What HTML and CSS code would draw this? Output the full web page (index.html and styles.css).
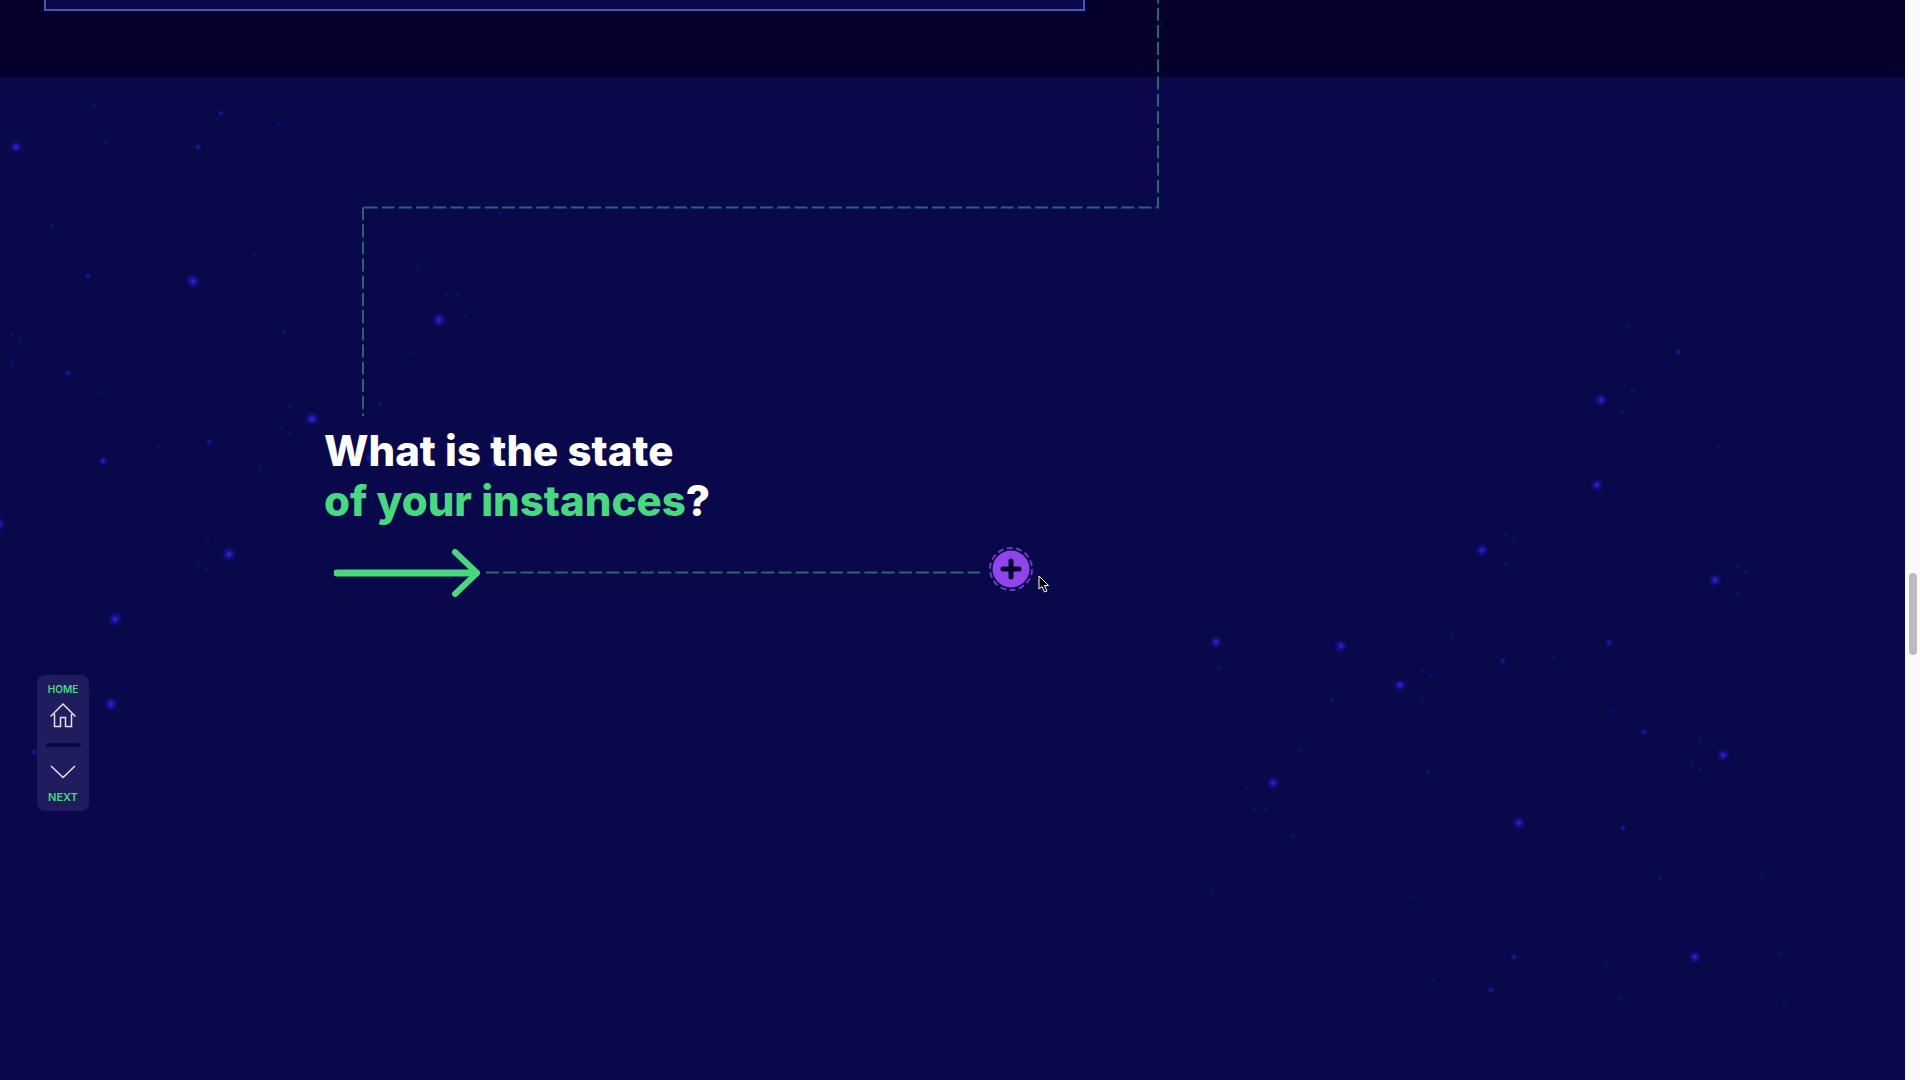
FILE: index.html
```html
<!DOCTYPE html>
<html lang="en">
<head>
<meta charset="utf-8">
<meta name="viewport" content="width=device-width, initial-scale=1">
<title>What is the state of your instances?</title>
<link rel="stylesheet" href="styles.css">
</head>
<body>
<div class="page">
  <section class="previous">
    <div class="panel"></div>
  </section>
  <main class="stage">
    <h1 class="title">What is the state<br><span class="accent">of your instances</span>?</h1>
    <div class="step">
      <svg class="arrow" viewBox="0 0 148 52" aria-hidden="true">
        <path d="M3 26H142" stroke-width="7"/>
        <path d="M121 5L143 26L121 47" stroke-width="6"/>
      </svg>
      <svg class="trail" viewBox="0 0 494 52" aria-hidden="true">
        <path class="dash" d="M0 25.5H494"/>
      </svg>
      <button class="plus" type="button" aria-label="Show more">
        <svg viewBox="0 0 44 44" aria-hidden="true">
          <circle class="ring" cx="22" cy="22" r="21"/>
          <circle class="disc" cx="22" cy="22" r="18.5"/>
          <path class="cross" d="M22 14V30M14 22H30"/>
        </svg>
      </button>
    </div>
  </main>

  <svg class="connector" aria-hidden="true">
    <path class="dash first" d="M1158 0V207.5H363"/>
    <path class="dash" d="M363 207V416"/>
  </svg>

  <svg class="stars stars-left" aria-hidden="true">
    <defs>
      <radialGradient id="glow">
        <stop offset="0" stop-color="#3a3ad0"/>
        <stop offset=".22" stop-color="#1c18ae"/>
        <stop offset=".55" stop-color="#120f88" stop-opacity=".75"/>
        <stop offset="1" stop-color="#08084b" stop-opacity="0"/>
      </radialGradient>
      <radialGradient id="spark">
        <stop offset="0" stop-color="#1c18ae"/>
        <stop offset=".5" stop-color="#140f88" stop-opacity=".8"/>
        <stop offset="1" stop-color="#08084b" stop-opacity="0"/>
      </radialGradient>
    </defs>
    <g fill="url(#glow)">
      <circle cx="16" cy="147" r="8"/><circle cx="193" cy="281" r="9"/><circle cx="439" cy="320" r="9"/>
      <circle cx="312" cy="419" r="9"/><circle cx="229" cy="554" r="9"/><circle cx="115" cy="619" r="9"/>
      <circle cx="111" cy="704" r="9"/><circle cx="103" cy="461" r="6"/><circle cx="-1" cy="524" r="8"/>
    </g>
    <g fill="url(#spark)">
      <circle cx="221" cy="113" r="4"/><circle cx="198" cy="147" r="4"/><circle cx="88" cy="276" r="4"/>
      <circle cx="68" cy="373" r="4"/><circle cx="209" cy="442" r="4"/><circle cx="34" cy="752" r="4"/>
      <circle cx="370" cy="458" r="7"/><circle cx="494" cy="464" r="5"/><circle cx="493" cy="436" r="4"/>
    </g>
    <g class="dust">
      <circle cx="94" cy="106" r="2"/><circle cx="106" cy="142" r="2"/><circle cx="279" cy="124" r="2"/>
      <circle cx="52" cy="226" r="2"/><circle cx="255" cy="254" r="2"/><circle cx="300" cy="208" r="2"/>
      <circle cx="12" cy="335" r="2"/><circle cx="20" cy="341" r="2"/><circle cx="12" cy="363" r="2"/>
      <circle cx="101" cy="393" r="2"/><circle cx="284" cy="332" r="2"/><circle cx="290" cy="406" r="2"/>
      <circle cx="281" cy="428" r="2"/><circle cx="289" cy="434" r="2"/><circle cx="260" cy="467" r="2"/>
      <circle cx="159" cy="446" r="2"/><circle cx="380" cy="404" r="2"/><circle cx="418" cy="269" r="2"/>
      <circle cx="447" cy="294" r="2"/><circle cx="457" cy="294" r="2"/><circle cx="465" cy="316" r="2"/>
      <circle cx="413" cy="353" r="2"/><circle cx="501" cy="213" r="2"/><circle cx="207" cy="541" r="2"/>
      <circle cx="198" cy="563" r="2"/><circle cx="206" cy="569" r="2"/><circle cx="90" cy="691" r="2"/>
      <circle cx="80" cy="713" r="2"/><circle cx="88" cy="718" r="2"/><circle cx="85" cy="777" r="2"/>
    </g>
  </svg>

  <svg class="stars stars-right" viewBox="1180 0 725 1080" aria-hidden="true">
    <g fill="url(#glow)">
      <circle cx="1601" cy="400" r="8"/><circle cx="1597" cy="485" r="8"/><circle cx="1482" cy="550" r="8"/>
      <circle cx="1715" cy="580" r="8"/><circle cx="1216" cy="642" r="8"/><circle cx="1341" cy="646" r="8"/>
      <circle cx="1400" cy="685" r="8"/><circle cx="1273" cy="783" r="8"/><circle cx="1723" cy="755" r="8"/>
      <circle cx="1519" cy="823" r="8"/><circle cx="1695" cy="957" r="8"/>
    </g>
    <g fill="url(#spark)">
      <circle cx="1609" cy="643" r="5"/>
      <circle cx="1678" cy="352" r="4"/><circle cx="1503" cy="661" r="4"/><circle cx="1644" cy="732" r="4"/>
      <circle cx="1623" cy="828" r="4"/><circle cx="1514" cy="957" r="4"/><circle cx="1491" cy="990" r="4"/>
    </g>
    <g class="dust">
      <circle cx="1627" cy="326" r="2"/><circle cx="1624" cy="386" r="2"/><circle cx="1633" cy="390" r="2"/>
      <circle cx="1622" cy="412" r="2"/><circle cx="1728" cy="426" r="2"/><circle cx="1718" cy="447" r="2"/>
      <circle cx="1506" cy="535" r="2"/><circle cx="1514" cy="541" r="2"/><circle cx="1506" cy="564" r="2"/>
      <circle cx="1738" cy="566" r="2"/><circle cx="1746" cy="572" r="2"/><circle cx="1738" cy="594" r="2"/>
      <circle cx="1219" cy="668" r="2"/><circle cx="1452" cy="637" r="2"/><circle cx="1553" cy="658" r="2"/>
      <circle cx="1423" cy="670" r="2"/><circle cx="1431" cy="676" r="2"/><circle cx="1422" cy="699" r="2"/>
      <circle cx="1332" cy="700" r="2"/><circle cx="1611" cy="711" r="2"/><circle cx="1299" cy="750" r="2"/>
      <circle cx="1428" cy="772" r="2"/><circle cx="1700" cy="741" r="2"/><circle cx="1692" cy="763" r="2"/>
      <circle cx="1700" cy="769" r="2"/><circle cx="1247" cy="788" r="2"/><circle cx="1255" cy="810" r="2"/>
      <circle cx="1265" cy="810" r="2"/><circle cx="1293" cy="836" r="2"/><circle cx="1456" cy="850" r="2"/>
      <circle cx="1660" cy="878" r="2"/><circle cx="1762" cy="875" r="2"/><circle cx="1211" cy="891" r="2"/>
      <circle cx="1413" cy="897" r="2"/><circle cx="1606" cy="963" r="2"/><circle cx="1433" cy="980" r="2"/>
      <circle cx="1619" cy="998" r="2"/><circle cx="1785" cy="1003" r="2"/><circle cx="1781" cy="954" r="2"/>
    </g>
  </svg>

  <nav class="jump" aria-label="Page">
    <a class="jump-link home" href="#home">
      <span>HOME</span>
      <svg class="jump-icon" viewBox="0 0 28 26" aria-hidden="true">
        <path d="M1.500 14.5L14 2L26.500 14.5M5.500 12V24.5H11.500V15.500H16.500V24.5H22.500V12"/>
      </svg>
    </a>
    <span class="rule"></span>
    <a class="jump-link" href="#next">
      <svg class="jump-icon chevron" viewBox="0 0 28 14" aria-hidden="true">
        <path d="M2 1L14 12.500L26 1"/>
      </svg>
      <span>NEXT</span>
    </a>
  </nav>

  <svg class="cursor" viewBox="0 0 12 19" aria-hidden="true">
    <path d="M1 1V14L4 11.500L6.500 17L9 16L6.500 10.500H10.500Z"/>
  </svg>
</div>
<div class="scrollbar"><div class="thumb"></div></div>
</body>
</html>
```
FILE: styles.css
```css
* {
  box-sizing: border-box;
}

body {
  margin: 0;
  display: flex;
  min-height: 100vh;
  overflow: hidden;
  background: #08084b;
  color: #fff;
  font-family: Inter, "Liberation Sans", sans-serif;
}

svg {
  display: block;
  fill: none;
}

.page {
  position: relative;
  flex: 1;
  display: flex;
  flex-direction: column;
  overflow: hidden;
}

.previous {
  padding: 0 44px 66px;
  background: #04002b;
}

.panel {
  max-width: 1041px;
  height: 11px;
  border: 2px solid #4a55b8;
  border-top: 0;
  background: #08084b;
}

.stage {
  position: relative;
  z-index: 1;
  flex: 1;
  padding: 349px 324px 0;
}

.title {
  margin: 0;
  font-size: 42px;
  line-height: 50px;
  font-weight: 800;
}

.accent {
  color: #47d880;
}

.step {
  display: flex;
  margin-top: 21px;
  padding-left: 10px;
}

.arrow {
  width: 148px;
  height: 52px;
  margin-right: 4px;
  stroke: #47d880;
  stroke-linecap: round;
  stroke-linejoin: round;
}

.trail {
  width: 494px;
  height: 52px;
  margin-right: 9px;
}

.dash {
  stroke: #27666c;
  stroke-width: 2;
  stroke-dasharray: 13 4.2;
}

.first {
  stroke-dashoffset: 9.5;
}

.plus {
  width: 44px;
  height: 44px;
  padding: 0;
  border: 0;
  background: none;
  cursor: pointer;
}

.ring {
  stroke: #6a3cc0;
  stroke-width: 2;
  stroke-dasharray: 6 3.4;
}

.disc {
  fill: #9045ea;
}

.cross {
  stroke: #08062f;
  stroke-width: 5;
  stroke-linecap: round;
}

.connector {
  position: absolute;
  top: 0;
  left: 0;
  width: 100%;
  height: 420px;
}

.stars {
  position: absolute;
  top: 0;
  height: 1080px;
}

.stars-left {
  left: 0;
  width: 520px;
}

.stars-right {
  right: 0;
  width: 725px;
}

.dust {
  fill: #120f78;
  opacity: 0.8;
}

.jump {
  position: absolute;
  z-index: 2;
  left: 37px;
  top: 675px;
  display: flex;
  flex-direction: column;
  align-items: center;
  width: 52px;
  padding: 7px 0;
  border-radius: 8px;
  background: #1f1d5d;
}

.jump-link {
  display: flex;
  flex-direction: column;
  align-items: center;
  gap: 6px;
  color: #47d880;
  font-size: 11px;
  line-height: 14px;
  font-weight: 600;
  text-decoration: none;
}

.home {
  font-size: 10px;
}

.jump-icon {
  width: 28px;
  height: 26px;
  stroke: #e4e2f4;
  stroke-width: 1.5;
}

.chevron {
  height: 14px;
  margin-bottom: 5px;
}

.rule {
  width: 35px;
  height: 4px;
  margin: 15px 0 18px;
  border-radius: 2px;
  background: #0a0948;
}

.cursor {
  position: absolute;
  z-index: 3;
  left: 1038px;
  top: 575px;
  width: 12px;
  height: 19px;
  fill: #000;
  stroke: #fff;
}

.scrollbar {
  width: 15px;
  padding: 573px 3px 0 4px;
  background: #fafafa;
}

.thumb {
  height: 82px;
  border-radius: 4px;
  background: #bbb;
}
```
